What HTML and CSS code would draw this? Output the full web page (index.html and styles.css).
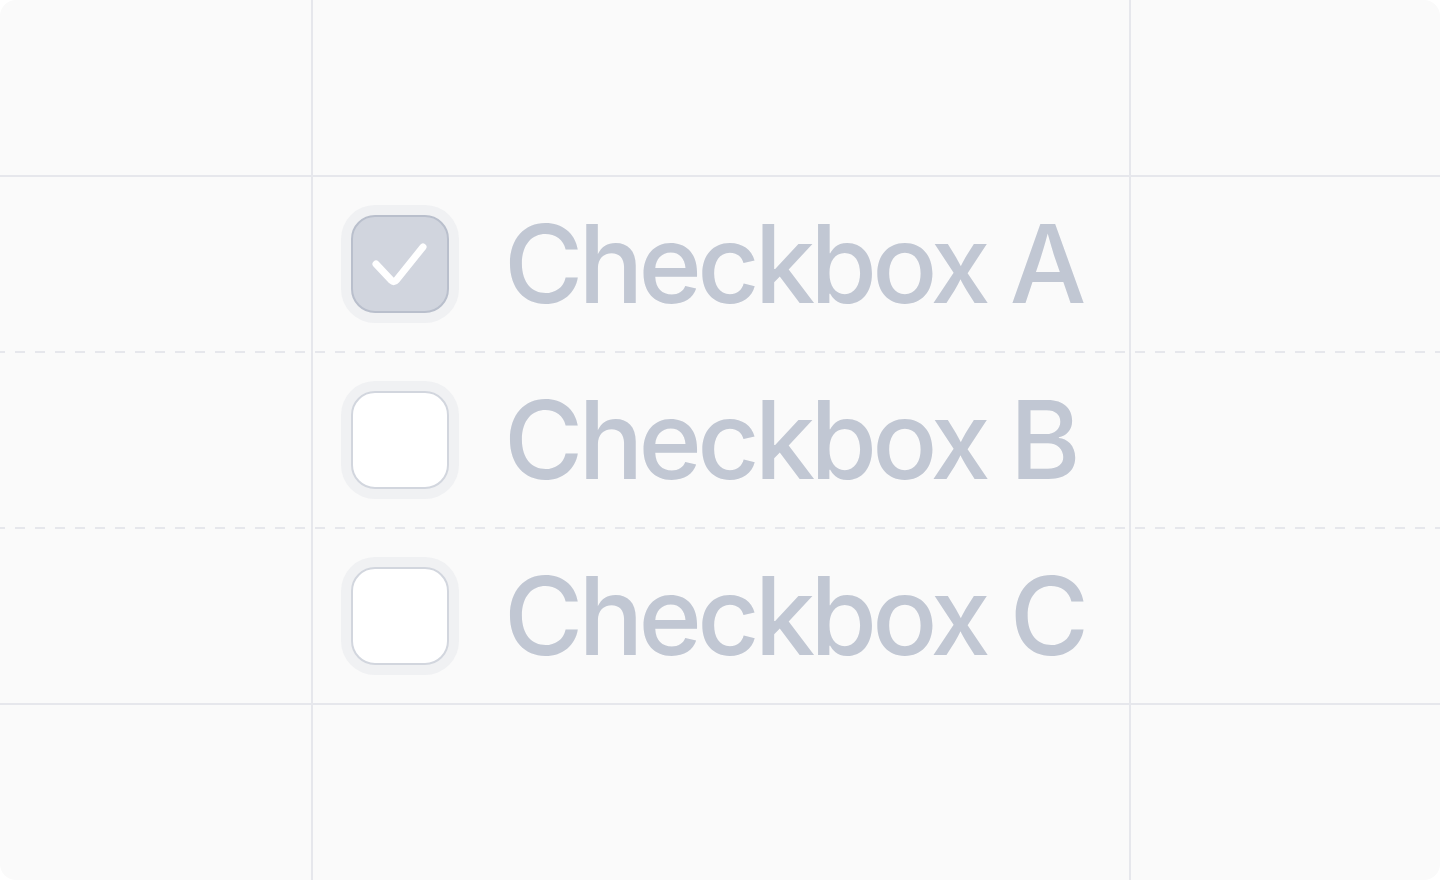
FILE: index.html
```html
<!DOCTYPE html>
<html lang="en">
<head>
<meta charset="utf-8">
<title>Checkboxes</title>
<link rel="stylesheet" href="styles.css">
</head>
<body>
<div class="card">
  <div class="band band-edge band-top">
    <div class="cell cell-left"></div>
    <div class="cell cell-mid"></div>
    <div class="cell cell-right"></div>
  </div>
  <div class="band band-row">
    <div class="cell cell-left"></div>
    <div class="cell cell-mid">
      <label class="option">
        <span class="ring"><span class="box box-checked">
          <svg class="check" viewBox="0 0 98 98" width="98" height="98" aria-hidden="true">
            <path d="M25 49 L40.5 65.5 Q43 68 45.5 65 L72 32" fill="none" stroke="#ffffff" stroke-width="7" stroke-linecap="round" stroke-linejoin="round"/>
          </svg>
        </span></span>
        <span class="label-text">Checkbox A</span>
      </label>
    </div>
    <div class="cell cell-right"></div>
  </div>
  <div class="dash"><div class="cell cell-left"></div><div class="cell cell-mid"></div><div class="cell cell-right"></div></div>
  <div class="band band-row">
    <div class="cell cell-left"></div>
    <div class="cell cell-mid">
      <label class="option">
        <span class="ring"><span class="box"></span></span>
        <span class="label-text">Checkbox B</span>
      </label>
    </div>
    <div class="cell cell-right"></div>
  </div>
  <div class="dash"><div class="cell cell-left"></div><div class="cell cell-mid"></div><div class="cell cell-right"></div></div>
  <div class="band band-row">
    <div class="cell cell-left"></div>
    <div class="cell cell-mid">
      <label class="option">
        <span class="ring"><span class="box"></span></span>
        <span class="label-text">Checkbox C</span>
      </label>
    </div>
    <div class="cell cell-right"></div>
  </div>
  <div class="band band-edge band-bottom">
    <div class="cell cell-left"></div>
    <div class="cell cell-mid"></div>
    <div class="cell cell-right"></div>
  </div>
</div>
</body>
</html>
```

FILE: styles.css
```css
* { box-sizing: border-box; }

html, body {
  margin: 0;
  padding: 0;
  background: #ffffff;
}

body {
  font-family: Inter, "Noto Sans", "Liberation Sans", sans-serif;
}

.card {
  width: 1440px;
  height: 880px;
  background: #fafafa;
  border-radius: 16px;
  overflow: hidden;
  display: flex;
  flex-direction: column;
}

.band {
  display: flex;
}

.band-top {
  height: 177px;
  border-bottom: 2px solid #e6e7ec;
}

.band-row {
  height: 174px;
}

.band-bottom {
  flex: 1;
  border-top: 2px solid #e6e7ec;
}

.cell {
  height: 100%;
}

.cell-left {
  width: 313px;
  border-right: 2px solid #e6e7ec;
}

.cell-mid {
  width: 818px;
  border-right: 2px solid #e6e7ec;
  display: flex;
  align-items: center;
  padding-left: 29px;
}

.cell-right {
  flex: 1;
}

.dash {
  height: 2px;
  display: flex;
  background-image: repeating-linear-gradient(to right,
    #e6e7ec 0, #e6e7ec 5px,
    transparent 5px, transparent 15px,
    #e6e7ec 15px, #e6e7ec 20px);
  background-attachment: fixed;
}

.dash .cell-mid {
  padding: 0;
}

.option {
  display: flex;
  align-items: center;
  gap: 46px;
}

.ring {
  width: 118px;
  height: 118px;
  border-radius: 34px;
  background: #f0f1f3;
  padding: 10px;
  display: block;
  margin-left: -1px;
  margin-right: -1px;
}

.box {
  display: block;
  position: relative;
  width: 98px;
  height: 98px;
  border-radius: 24px;
  background: #ffffff;
  border: 2px solid #d2d6de;
}

.box-checked {
  background: #d1d5de;
  border-color: #b9bfcc;
}

.check {
  position: absolute;
  left: -2px;
  top: -2px;
}

.label-text {
  font-size: 108px;
  line-height: 1;
  color: #c1c7d3;
  font-weight: 450;
  letter-spacing: -4.8px;
  white-space: nowrap;
}
```
